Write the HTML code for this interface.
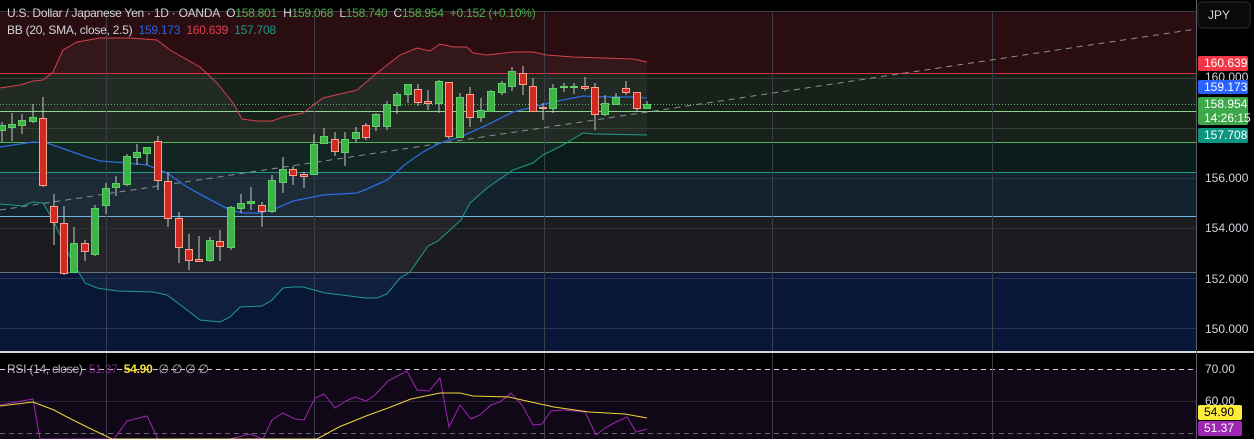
<!DOCTYPE html>
<html><head><meta charset="utf-8"><style>
html,body{margin:0;padding:0;background:#000;width:1254px;height:439px;overflow:hidden;font-family:"Liberation Sans",sans-serif}
.t{position:absolute;font-size:12px;white-space:nowrap;color:#d1d4dc;letter-spacing:-0.25px}
.ax{position:absolute;left:1205px;font-size:12px;color:#d1d4dc}
.tag{position:absolute;left:1198px;width:50px;font-size:12px;color:#fff;border-radius:2px;padding-left:6px;box-sizing:border-box;line-height:14px}
</style></head><body>
<svg width="1254" height="439" style="position:absolute;left:0;top:0">
<rect x="0" y="11" width="1196" height="62" fill="#2a0d11"/>
<rect x="0" y="73" width="1196" height="69" fill="#17211a"/>
<rect x="0" y="142" width="1196" height="30" fill="#091c1a"/>
<rect x="0" y="172" width="1196" height="44" fill="#13222f"/>
<rect x="0" y="216" width="1196" height="56" fill="#1b1c1f"/>
<rect x="0" y="272" width="1196" height="80" fill="#081638"/>
<rect x="0" y="369" width="1196" height="70" fill="#110817"/>
<path d="M0,88 L20,85 L33,81 L43,80 L53,72 L63,50 L77,42 L100,38 L130,38 L157,40 L170,50 L200,67 L217,83 L233,103 L242,119 L257,121 L272,121 L283,117 L303,113 L323,98 L357,90 L377,73 L400,55 L417,48 L430,51 L440,44 L453,47 L467,47 L473,53 L487,55 L513,52 L533,52 L547,55 L573,57 L633,59 L647,62 L647,135 L593,134 L583,133 L563,145 L543,155 L533,163 L513,170 L487,188 L470,203 L461,220 L450,230 L438,241 L428,246 L410,272 L400,278 L387,294 L377,298 L365,298 L350,296 L325,293 L303,287 L293,287 L283,288 L272,300 L262,306 L240,307 L230,317 L220,322 L200,320 L187,310 L167,295 L153,292 L117,291 L97,288 L85,283 L70,257 L53,220 L43,203 L33,202 L23,206 L0,204 Z" fill="rgba(255,255,255,0.045)"/>
<g stroke-width="1">
<line x1="0" y1="11.5" x2="1196" y2="11.5" stroke="#3a3a3e"/>
<line x1="0" y1="73.5" x2="1196" y2="73.5" stroke="#d8343f"/>
<line x1="0" y1="78.5" x2="1196" y2="78.5" stroke="#36403a"/>
<line x1="0" y1="104.5" x2="1196" y2="104.5" stroke="#5eb05f" stroke-dasharray="1,2"/>
<line x1="0" y1="111.5" x2="1196" y2="111.5" stroke="#8fd38e"/>
<line x1="0" y1="128.5" x2="1196" y2="128.5" stroke="#36403a"/>
<line x1="0" y1="142.5" x2="1196" y2="142.5" stroke="#4db856"/>
<line x1="0" y1="172.5" x2="1196" y2="172.5" stroke="#1f9b90"/>
<line x1="0" y1="178.5" x2="1196" y2="178.5" stroke="#2b3644"/>
<line x1="0" y1="216.5" x2="1196" y2="216.5" stroke="#6fb6e6"/>
<line x1="0" y1="228.5" x2="1196" y2="228.5" stroke="#303236"/>
<line x1="0" y1="272.5" x2="1196" y2="272.5" stroke="#6b6f78"/>
<line x1="0" y1="278.5" x2="1196" y2="278.5" stroke="#283556"/>
<line x1="0" y1="328.5" x2="1196" y2="328.5" stroke="#283556"/>
<line x1="0" y1="369.5" x2="1196" y2="369.5" stroke="#cfcfcf" stroke-dasharray="5,4"/>
<line x1="0" y1="401.5" x2="1196" y2="401.5" stroke="#2e2638"/>
<line x1="0" y1="433.5" x2="1196" y2="433.5" stroke="#6c6478" stroke-dasharray="5,4"/>
</g>
<g stroke="#3a3e48" stroke-width="1">
<line x1="106.5" y1="11" x2="106.5" y2="439"/><line x1="314.5" y1="11" x2="314.5" y2="439"/>
<line x1="544.5" y1="11" x2="544.5" y2="439"/><line x1="772.5" y1="11" x2="772.5" y2="439"/>
<line x1="992.5" y1="11" x2="992.5" y2="439"/>
</g>
<line x1="0" y1="210" x2="1196" y2="29" stroke="#8a8f96" stroke-width="1" stroke-dasharray="6,5"/>
<polyline fill="none" stroke="#d6404c" stroke-width="1" points="0,88 20,85 33,81 43,80 53,72 63,50 77,42 100,38 130,38 157,40 170,50 200,67 217,83 233,103 242,119 257,121 272,121 283,117 303,113 323,98 357,90 377,73 400,55 417,48 430,51 440,44 453,47 467,47 473,53 487,55 513,52 533,52 547,55 573,57 633,59 647,62"/>
<polyline fill="none" stroke="#2f6ae0" stroke-width="1.3" points="0,147 20,144 33,142 47,143 67,150 87,157 100,161 127,163 147,165 167,173 187,187 207,198 230,210 243,213 260,213 277,208 293,201 323,195 357,193 367,189 387,180 407,163 423,152 440,143 460,137 487,125 513,112 533,107 553,102 583,96 607,97 633,97 647,98"/>
<polyline fill="none" stroke="#1f9b8c" stroke-width="1" points="0,204 23,206 33,202 43,203 53,220 70,257 85,283 97,288 117,291 153,292 167,295 187,310 200,320 220,322 230,317 240,307 262,306 272,300 283,288 293,287 303,287 325,293 350,296 365,298 377,298 387,294 400,278 410,272 428,246 438,241 450,230 461,220 470,203 487,188 513,170 533,163 543,155 563,145 583,133 593,134 647,135"/>
<polyline fill="none" stroke="#9c27b0" stroke-width="1" points="0,405 33,399 40,439 114,439 127,421 147,416 158,439 230,439 250,434 263,439 272,420 283,413 295,419 304,420 315,398 324,394 335,408 346,401 355,397 366,401 375,395 388,381 407,371 417,390 429,391 440,378 449,427 460,405 471,419 480,415 491,405 500,402 511,393 522,405 533,425 542,424 551,411 565,410 585,412 596,435 605,428 616,422 627,417 636,432 647,429"/>
<polyline fill="none" stroke="#f0d43a" stroke-width="1" points="0,406 33,402 54,410 67,417 89,428 112,439 317,439 339,427 366,416 388,408 411,399 440,393 460,393 473,396 509,397 522,400 554,407 589,412 625,414 647,418"/>
<rect x="0" y="351" width="1254" height="2" fill="#d8d8d8"/>
<rect x="1196" y="0" width="1" height="439" fill="#5a5d66"/>
<rect x="1198" y="2" width="52" height="26" rx="4" fill="#0a0a0a" stroke="#2a2a2e"/>
</svg>
<svg width="1254" height="439" style="position:absolute;left:0;top:0">
<g fill="none" stroke="#c8c8c8">
<path d="M2,122V142M12,113V141M22,114V134M33,104V123M43,97V187M54,194V245M64,206V275M74,227V273M85,240V261M95,205V256M106,183V214M116,176V196M127,154V186M137,144V165M147,147V165M158,136V190M168,172V227M179,212V263M189,234V270M199,236V262M210,237V262M220,230V261M231,206V250M241,194V213M251,187V210M262,202V227M272,175V213M283,157V193M293,166V185M304,172V188M314,134V174M324,128V143M335,132V156M345,132V166M356,127V142M366,123V140M376,113V131M387,101V130M397,92V114M408,84V103M418,84V106M428,90V110M439,80V113M449,82V139M460,93V137M470,87V127M481,98V122M491,90V112M502,81V95M512,67V91M523,66V95M533,78V111M543,103V120M553,84V113M564,83V92M574,83V94M585,77V91M595,83V130M605,95V116M616,93V105M626,81V95M637,92V112M647,101V109"/>
</g>
<g fill="#3fb34a" stroke="#5fd068">
<rect x="-1.5" y="125.5" width="7" height="5"/><rect x="8.5" y="124.5" width="7" height="3"/><rect x="18.5" y="120.5" width="7" height="5"/><rect x="29.5" y="117.5" width="7" height="4"/>
<rect x="70.5" y="243.5" width="7" height="29"/><rect x="91.5" y="208.5" width="7" height="46"/><rect x="102.5" y="188.5" width="7" height="17"/><rect x="112.5" y="183.5" width="7" height="4"/><rect x="123.5" y="156.5" width="7" height="28"/><rect x="133.5" y="152.5" width="7" height="5"/><rect x="143.5" y="147.5" width="7" height="6"/>
<rect x="206.5" y="240.5" width="7" height="20"/><rect x="227.5" y="207.5" width="7" height="40"/><rect x="237.5" y="203.5" width="7" height="5"/><rect x="247.5" y="201.5" width="7" height="2"/><rect x="268.5" y="180.5" width="7" height="31"/><rect x="279.5" y="169.5" width="7" height="13"/>
<rect x="310.5" y="144.5" width="7" height="30"/><rect x="320.5" y="136.5" width="7" height="7"/><rect x="341.5" y="139.5" width="7" height="13"/><rect x="352.5" y="132.5" width="7" height="6"/><rect x="372.5" y="114.5" width="7" height="12"/><rect x="383.5" y="104.5" width="7" height="22"/><rect x="393.5" y="94.5" width="7" height="11"/><rect x="404.5" y="84.5" width="7" height="10"/>
<rect x="435.5" y="81.5" width="7" height="22"/><rect x="456.5" y="97.5" width="7" height="40"/><rect x="477.5" y="110.5" width="7" height="7"/><rect x="487.5" y="91.5" width="7" height="20"/><rect x="498.5" y="83.5" width="7" height="9"/><rect x="508.5" y="71.5" width="7" height="15"/>
<rect x="549.5" y="88.5" width="7" height="20"/><rect x="560.5" y="86.5" width="7" height="1"/><rect x="570.5" y="86.5" width="7" height="1"/><rect x="601.5" y="103.5" width="7" height="11"/><rect x="612.5" y="97.5" width="7" height="7"/><rect x="643.5" y="104.5" width="7" height="4"/>
</g>
<g fill="#d22a20" stroke="#f7a48e">
<rect x="39.5" y="118.5" width="7" height="67"/><rect x="50.5" y="206.5" width="7" height="16"/><rect x="60.5" y="223.5" width="7" height="50"/><rect x="81.5" y="243.5" width="7" height="8"/>
<rect x="154.5" y="141.5" width="7" height="39"/><rect x="164.5" y="181.5" width="7" height="37"/><rect x="175.5" y="218.5" width="7" height="29"/><rect x="185.5" y="249.5" width="7" height="11"/><rect x="195.5" y="259.5" width="7" height="2"/><rect x="216.5" y="241.5" width="7" height="5"/><rect x="258.5" y="205.5" width="7" height="6"/>
<rect x="289.5" y="169.5" width="7" height="6"/><rect x="300.5" y="174.5" width="7" height="2"/><rect x="331.5" y="139.5" width="7" height="12"/><rect x="362.5" y="125.5" width="7" height="12"/>
<rect x="414.5" y="89.5" width="7" height="13"/><rect x="424.5" y="101.5" width="7" height="2"/><rect x="445.5" y="82.5" width="7" height="54"/><rect x="466.5" y="94.5" width="7" height="23"/><rect x="519.5" y="73.5" width="7" height="11"/><rect x="529.5" y="86.5" width="7" height="25"/><rect x="539.5" y="107.5" width="7" height="1"/>
<rect x="581.5" y="86.5" width="7" height="2"/><rect x="591.5" y="87.5" width="7" height="27"/><rect x="622.5" y="88.5" width="7" height="4"/><rect x="633.5" y="92.5" width="7" height="16"/>
</g>
</svg>
<div class="t" style="left:7px;top:6px">U.S. Dollar / Japanese Yen · 1D · OANDA&nbsp; O<span style="color:#4caf50">158.801</span>&nbsp; H<span style="color:#4caf50">159.068</span>&nbsp; L<span style="color:#4caf50">158.740</span>&nbsp; C<span style="color:#4caf50">158.954</span>&nbsp; <span style="color:#4caf50">+0.152 (+0.10%)</span></div>
<div class="t" style="left:7px;top:23px">BB (20, SMA, close, 2.5)&nbsp; <span style="color:#2f5fe0">159.173</span>&nbsp; <span style="color:#e0404d">160.639</span>&nbsp; <span style="color:#199a87">157.708</span></div>
<div class="t" style="left:7px;top:362px;color:#b7b9c0">RSI (14, close)&nbsp; <span style="color:#7b2a8a">51.37</span>&nbsp; <span style="color:#f5e03a;font-weight:bold">54.90</span>&nbsp; ∅ ∅ ∅ ∅</div>
<div class="ax" style="left:1208px;top:8px;font-size:12px">JPY</div>
<div class="ax" style="top:70px">160.000</div>
<div class="tag" style="top:56px;height:15px;background:#f23645">160.639</div>
<div class="tag" style="top:80px;height:14px;background:#2962ff">159.173</div>
<div class="tag" style="top:97px;height:28px;background:#3da84a">158.954<br>14:26:15</div>
<div class="tag" style="top:128px;height:15px;background:#0c9680">157.708</div>
<div class="ax" style="top:171px">156.000</div>
<div class="ax" style="top:221px">154.000</div>
<div class="ax" style="top:272px">152.000</div>
<div class="ax" style="top:322px">150.000</div>
<div class="ax" style="top:362px">70.00</div>
<div class="ax" style="top:394px">60.00</div>
<div class="tag" style="top:405px;height:15px;width:44px;background:#ffeb3b;color:#000">54.90</div>
<div class="tag" style="top:421px;height:15px;width:44px;background:#9c27b0">51.37</div>
</body></html>
